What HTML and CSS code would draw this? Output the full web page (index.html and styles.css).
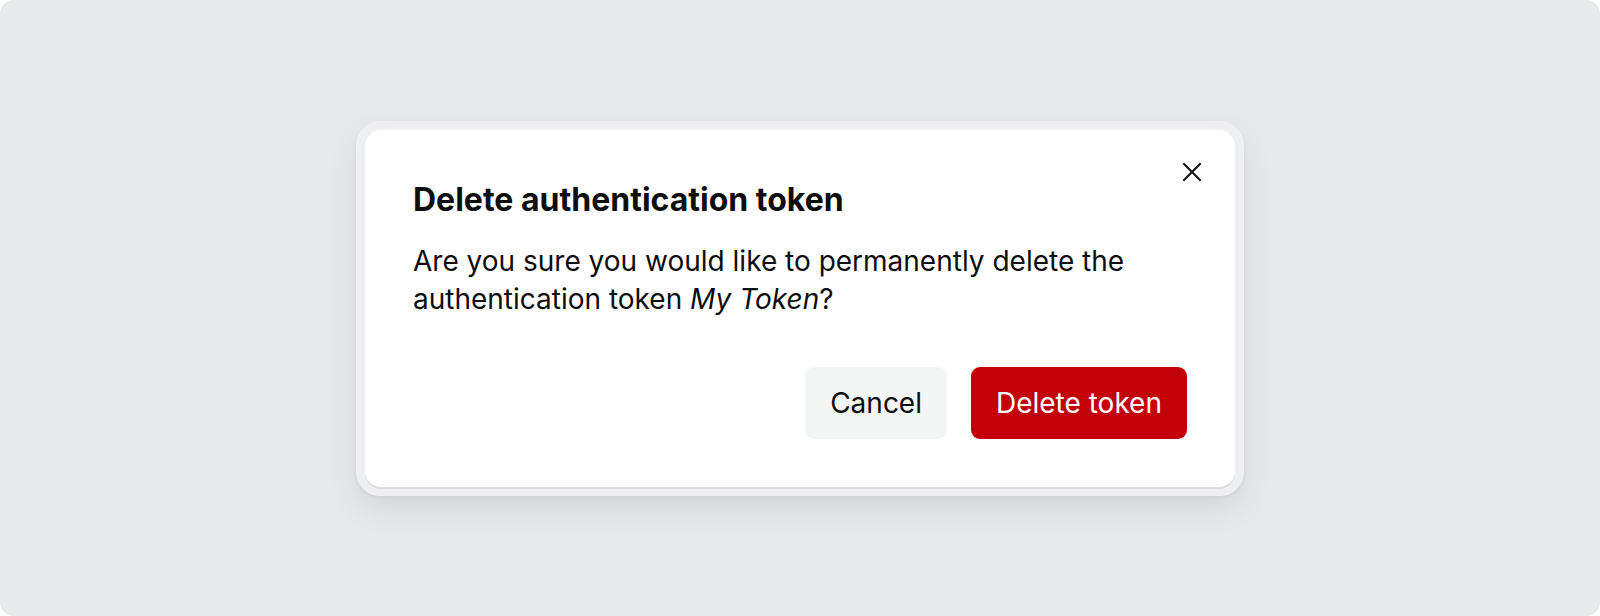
FILE: index.html
```html
<!DOCTYPE html>
<html lang="en">
<head>
<meta charset="utf-8">
<title>Delete authentication token</title>
<link rel="stylesheet" href="styles.css">
</head>
<body>
<div class="stage">
  <div class="dialog-ring">
    <div class="dialog" role="dialog" aria-labelledby="dlg-title">
      <button class="close" aria-label="Close">
        <svg width="24" height="24" viewBox="0 0 24 24" fill="none" stroke="#111" stroke-width="2" stroke-linecap="square">
          <path d="M4 4L20 20M20 4L4 20"/>
        </svg>
      </button>
      <h2 class="title" id="dlg-title">Delete authentication token</h2>
      <p class="message">Are you sure you would like to permanently delete the authentication token <em>My Token</em>?</p>
      <div class="actions">
        <button class="btn btn-secondary">Cancel</button>
        <button class="btn btn-danger">Delete token</button>
      </div>
    </div>
  </div>
</div>
</body>
</html>
```
FILE: styles.css
```css
html, body {
  margin: 0;
  padding: 0;
  background: #ffffff;
}
body {
  font-family: Inter, "Noto Sans", "Liberation Sans", sans-serif;
  color: #0d0d0d;
}
.stage {
  width: 1600px;
  height: 616px;
  box-sizing: border-box;
  background: #e8e9eb;
  border-radius: 14px;
  display: flex;
  align-items: center;
  justify-content: center;
  overflow: hidden;
}
.dialog-ring {
  padding: 9px;
  border-radius: 24px;
  background: rgba(255, 255, 255, 0.35);
  box-shadow: 0 14px 30px rgba(0, 0, 0, 0.08), 0 2px 4px rgba(0, 0, 0, 0.05);
}
.dialog {
  position: relative;
  width: 870px;
  box-sizing: border-box;
  padding: 50px 48px 48px 48px;
  background: #ffffff;
  border-radius: 16px;
  box-shadow: 0 2px 0 #dcdcdd;
}
.close {
  position: absolute;
  top: 30px;
  right: 31px;
  width: 24px;
  height: 24px;
  padding: 0;
  border: 0;
  background: transparent;
  display: flex;
}
.title {
  margin: 0;
  font-size: 32px;
  line-height: 40px;
  font-weight: 700;
  letter-spacing: 0;
}
.message {
  margin: 22px 0 0 0;
  font-size: 28px;
  line-height: 38px;
  font-weight: 400;
  max-width: 740px;
}
.message em {
  font-style: italic;
}
.actions {
  margin-top: 49px;
  display: flex;
  justify-content: flex-end;
  gap: 24px;
}
.btn {
  height: 72px;
  padding: 0 25px;
  border: 0;
  border-radius: 9px;
  font-family: inherit;
  font-size: 28px;
  font-weight: 400;
  cursor: pointer;
}
.btn-secondary {
  background: #f4f5f5;
  color: #0d0d0d;
}
.btn-danger {
  background: #c3000a;
  color: #ffffff;
}
```
